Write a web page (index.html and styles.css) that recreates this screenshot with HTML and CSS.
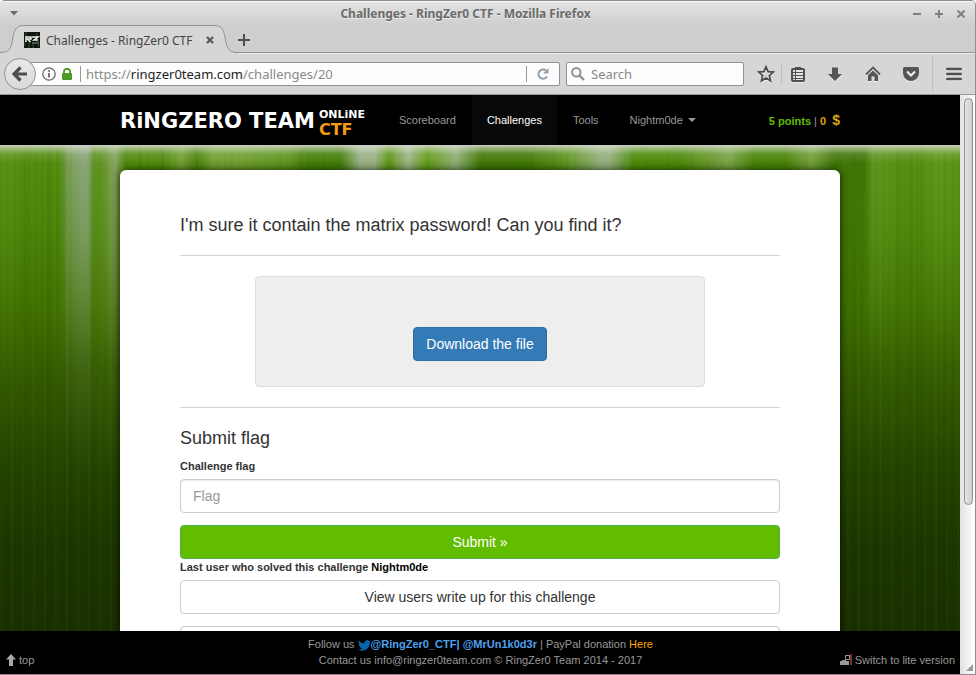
FILE: index.html
```html
<!DOCTYPE html>
<html lang="en">
<head>
<meta charset="utf-8">
<meta name="viewport" content="width=device-width, initial-scale=1">
<title>Challenges - RingZer0 CTF</title>
<link rel="stylesheet" href="styles.css">
</head>
<body>
<div class="window">
  <header class="chrome">
    <div class="titlebar">
      <button class="win-btn" aria-label="Window menu"><svg width="8" height="5" viewBox="0 0 8 5"><path d="M0 0h8L4 4.500z" fill="#6a6a6a"/></svg></button>
      <span class="win-title">Challenges - RingZer0 CTF - Mozilla Firefox</span>
      <div class="win-controls">
        <button class="win-btn" aria-label="Minimize"><svg width="8" height="8" viewBox="0 0 8 8"><path d="M0 4h8" stroke="#808080" stroke-width="2"/></svg></button>
        <button class="win-btn" aria-label="Maximize"><svg width="8" height="8" viewBox="0 0 8 8"><path d="M0 4h8M4 0v8" stroke="#808080" stroke-width="2"/></svg></button>
        <button class="win-btn" aria-label="Close"><svg width="8" height="8" viewBox="0 0 8 8"><path d="M.5.5l7 7M7.500.5l-7 7" stroke="#808080" stroke-width="2"/></svg></button>
      </div>
    </div>
    <div class="tabstrip">
      <div class="tab">
        <svg class="tab-edge" width="24" height="29" viewBox="0 0 24 29"><path d="M0 27.500C9 27.500 11 24 12.500 15C14 5 16 .5 24 .5V29H0z" fill="#d6d6d6"/><path d="M0 27.500C9 27.500 11 24 12.500 15C14 5 16 .5 24 .5" fill="none" stroke="#8f9294"/></svg>
        <div class="tab-body">
          <svg width="16" height="16" viewBox="0 0 16 16"><path fill="#101510" d="M0 0h16v16H0z"/><path d="M2 0v5M5 9v7M13 1v4M9 11v5M1 9v5M14.500 9v6" stroke="#285826"/><path d="M2 10V5h5v2H3.500l3 3M8 5h6l-4 3h4" fill="none" stroke="#f0f3ee" stroke-width="1.500"/><path d="M8 11h6" stroke="#8a918a"/></svg>
          <span class="tab-title">Challenges - RingZer0 CTF</span>
          <button class="win-btn" aria-label="Close tab"><svg width="8" height="8" viewBox="0 0 8 8"><path d="M1 1l6 6M7 1L1 7" stroke="#5a5a5a" stroke-width="2.400"/></svg></button>
        </div>
        <svg class="tab-edge" width="24" height="29" viewBox="0 0 24 29"><path d="M0 .5C8 .5 10 5 11.500 15C13 24 15 27.500 24 27.500V29H0z" fill="#d6d6d6"/><path d="M0 .5C8 .5 10 5 11.500 15C13 24 15 27.500 24 27.500" fill="none" stroke="#8f9294"/></svg>
      </div>
      <button class="new-tab" aria-label="New tab"><svg width="12" height="12" viewBox="0 0 12 12"><path d="M0 6h12M6 0v12" stroke="#4e4e4e" stroke-width="2"/></svg></button>
    </div>
    <div class="toolbar">
      <button class="back" aria-label="Back"><svg width="16" height="16" viewBox="0 0 16 16"><path d="M8.500 1.500L2 8l6.500 6.500M2.500 8H15" fill="none" stroke="#4d4d4d" stroke-width="3.200"/></svg></button>
      <div class="urlbar">
        <svg width="14" height="14" viewBox="0 0 14 14"><circle cx="7" cy="7" r="6.200" fill="none" stroke="#606060" stroke-width="1.200"/><path d="M7 6v4.500M7 3v1.800" stroke="#606060" stroke-width="1.700"/></svg>
        <svg class="lock" width="10" height="12" viewBox="0 0 10 12"><rect y="5" width="10" height="7" rx="1" fill="#4a9a25"/><path d="M2 6V3.500a3 2.700 0 0 1 6 0V6" fill="none" stroke="#4a9a25" stroke-width="1.800"/></svg>
        <span class="rule"></span>
        <div class="url" role="textbox" aria-label="Address" contenteditable="true" spellcheck="false">https://<b>ringzer0team.com</b>/challenges/20</div>
        <span class="rule"></span>
        <button class="reload" aria-label="Reload"><svg width="12" height="12" viewBox="0 0 12 12"><path d="M10 8.500A4.600 4.600 0 1 1 9 2.600" fill="none" stroke="#91a0ad" stroke-width="2"/><path d="M11.500 0v5.500H6z" fill="#91a0ad"/></svg></button>
      </div>
      <label class="search">
        <svg width="14" height="14" viewBox="0 0 14 14"><circle cx="5.300" cy="5.300" r="4.200" fill="none" stroke="#909090" stroke-width="2"/><path d="M8.500 8.500l4.500 4.500" stroke="#909090" stroke-width="2.400"/></svg>
        <input type="text" placeholder="Search" aria-label="Search">
      </label>
      <div class="tools">
        <button class="tool star" aria-label="Bookmark"><svg width="18" height="18" viewBox="0 0 18 18"><path d="M9 1.800l2.100 4.800 5.200.5-3.900 3.500 1.100 5.200L9 13.100l-4.500 2.700 1.100-5.200L1.700 7.100l5.200-.5z" fill="none" stroke="#505050" stroke-width="1.800"/></svg></button>
        <span class="rule pale"></span>
        <button class="tool list" aria-label="Bookmarks list"><svg width="16" height="16" viewBox="0 0 16 16"><path d="M5 3V1h6v2" fill="#505050"/><rect x="2" y="3" width="12" height="12" rx="1" fill="#e4e4e4" stroke="#505050" stroke-width="2"/><path d="M3 6.500h10M3 9.500h10M3 12.500h10" stroke="#505050"/><path d="M5.500 4v10" stroke="#505050"/></svg></button>
        <button class="tool" aria-label="Downloads"><svg width="16" height="16" viewBox="0 0 16 16"><path d="M5 1.500h6V8h4l-7 7-7-7h4z" fill="#555"/></svg></button>
        <button class="tool" aria-label="Home"><svg width="16" height="16" viewBox="0 0 16 16"><path d="M1 8.500l7-7 7 7" fill="none" stroke="#555" stroke-width="1.800"/><path d="M8 4.500L3 9.300V15h3.500v-4.500h3V15H13V9.300z" fill="#555"/></svg></button>
        <button class="tool" aria-label="Pocket"><svg width="18" height="16" viewBox="0 0 18 16"><path d="M2.500 1h13q1.500 0 1.500 1.500V7a8 8 0 0 1-16 0V2.500Q1 1 2.500 1z" fill="#555"/><path d="M5 5.500l4 4 4-4" fill="none" stroke="#eee" stroke-width="2.200"/></svg></button>
        <span class="rule tall"></span>
        <button class="tool" aria-label="Menu"><svg width="16" height="14" viewBox="0 0 16 14"><path d="M1.300 2h13.400M1.300 7h13.400M1.300 12h13.400" stroke="#505050" stroke-width="2.600" stroke-linecap="round"/></svg></button>
      </div>
    </div>
  </header>

  <div class="viewport">
    <div class="page">
      <nav class="navbar">
        <div class="container nav-row">
          <a class="brand" href="#"><span>RiNGZERO TEAM</span><span class="brand-side"><small>ONLiNE</small><b>CTF</b></span></a>
          <a class="nav-link" href="#">Scoreboard</a>
          <a class="nav-link active" href="#">Challenges</a>
          <a class="nav-link" href="#">Tools</a>
          <a class="nav-link" href="#">Nightm0de <span class="caret"></span></a>
          <div class="points"><b class="green">5 points</b> | <b class="gold">0 <span class="dollar">$</span></b></div>
        </div>
      </nav>
      <main class="backdrop">
        <div class="streaks"></div>
        <div class="container panel">
          <h3>I'm sure it contain the matrix password! Can you find it?</h3>
          <hr>
          <div class="well"><a class="btn btn-primary" href="#">Download the file</a></div>
          <hr>
          <form>
            <h3>Submit flag</h3>
            <label class="caption" for="flag">Challenge flag</label>
            <input class="field" id="flag" type="text" placeholder="Flag">
            <button class="btn btn-submit" type="button">Submit »</button>
            <p class="caption">Last user who solved this challenge <a href="#">Nightm0de</a></p>
            <button class="btn btn-default" type="button">View users write up for this challenge</button>
            <button class="btn btn-default" type="button" aria-label="More"></button>
          </form>
        </div>
      </main>
      <footer class="footer">
        <a class="corner" href="#"><svg width="10" height="12" viewBox="0 0 10 12"><path d="M5 0l5 5.500H7V12H3V5.500H0z" fill="#aaa"/></svg>top</a>
        <div class="credits">
          <div>Follow us <svg width="13" height="11" viewBox="0 0 24 20"><path d="M24 2.400a10 10 0 0 1-2.800.8A5 5 0 0 0 23.300.5a10 10 0 0 1-3.100 1.200 4.900 4.900 0 0 0-8.400 4.500A14 14 0 0 1 1.700 1a4.900 4.900 0 0 0 1.500 6.600 5 5 0 0 1-2.200-.6c0 2.300 1.600 4.400 3.900 4.900a5 5 0 0 1-2.200.1 4.900 4.900 0 0 0 4.600 3.400A10 10 0 0 1 0 17.500a14 14 0 0 0 21.500-12.500A10 10 0 0 0 24 2.400z" fill="#0a64a8"/></svg><a class="handle" href="#">@RingZer0_CTF</a><b class="handle">|</b> <a class="handle" href="#">@MrUn1k0d3r</a> | PayPal donation <a class="here" href="#">Here</a></div>
          <div>Contact us info@ringzer0team.com © RingZer0 Team 2014 - 2017</div>
        </div>
        <a class="corner right" href="#"><svg width="12" height="12" viewBox="0 0 12 12"><path d="M0 7h9v4H0zM2 6h4v1H2z" fill="#999"/><path d="M5.500 1.500h4v4h-4z" fill="none" stroke="#999"/><path d="M11 0v11" stroke="#a5482c" stroke-width="1.500"/></svg>Switch to lite version</a>
      </footer>
    </div>
    <div class="scrollbar"><div class="thumb"></div><svg class="grip" width="7" height="7" viewBox="0 0 7 7"><path d="M7 0v7H0z" fill="#999"/></svg></div>
  </div>
</div>
</body>
</html>
```
FILE: styles.css
```css
* { box-sizing: border-box; }
body { margin: 0; background: #fff; }
svg { display: block; flex: none; }
button { padding: 0; border: 0; background: none; font: inherit; }
a { color: inherit; text-decoration: none; }

.window {
  height: 100vh;
  display: flex;
  flex-direction: column;
  border: solid #8e8e8e;
  border-width: 1px 1px 1px 0;
  border-radius: 5px 5px 0 0;
  overflow: hidden;
}

/* Browser chrome */
.chrome { font-family: "Noto Sans", "Open Sans", sans-serif; font-size: 13px; color: #444; }
.titlebar {
  height: 24px;
  display: flex;
  align-items: center;
  justify-content: space-between;
  padding: 0 10px;
  border-top: 1px solid #f6f6f6;
  background: linear-gradient(#e4e4e4, #cecece);
}
.win-title { font-size: 12px; font-weight: 700; color: #6a6a6a; text-shadow: 0 1px #eee; }
.win-controls { display: flex; gap: 14px; }
.tabstrip {
  height: 29px;
  display: flex;
  background: linear-gradient(#cecece 27px, #8f9294 27px, #8f9294 28px, #f0f0f0 28px);
}
.tab { display: flex; }
.tab-body {
  display: flex;
  align-items: center;
  background: #d6d6d6;
  border-top: 1px solid #8f9294;
}
.tab-title { margin: 0 13px 0 6px; font-size: 12px; white-space: nowrap; }
.toolbar {
  height: 41px;
  display: flex;
  align-items: center;
  background: #d6d6d6;
  border-bottom: 1px solid #999;
  padding: 0 2px 0 4px;
}
.back {
  width: 32px;
  height: 32px;
  border: 1px solid #8e9294;
  border-radius: 50%;
  background: linear-gradient(#e8e8e8, #dadada);
  display: flex;
  align-items: center;
  justify-content: center;
  z-index: 1;
}
.urlbar {
  flex: 1;
  min-width: 0;
  height: 24px;
  margin-left: -6px;
  padding-left: 11px;
  display: flex;
  align-items: center;
  background: #fdfdfd;
  border: 1px solid #8e9294;
  border-radius: 2px;
}
.lock { margin: 0 8px 0 6px; }
.rule { width: 1px; height: 16px; background: #9a9a9a; }
.rule.pale { height: 18px; background: #bbb; }
.rule.tall { height: 36px; background: #c0c0c0; margin: 0 2px; }
.url { flex: 1; min-width: 0; padding-left: 5px; color: #8a8a8a; white-space: nowrap; overflow: hidden; outline: 0; }
.url b { font-weight: 400; color: #222; }
.reload { width: 32px; display: flex; justify-content: center; }
.search {
  flex: 0 0 178px;
  min-width: 0;
  height: 24px;
  display: flex;
  align-items: center;
  gap: 4px;
  margin: 0 7px 0 6px;
  padding-left: 4px;
  background: #fdfdfd;
  border: 1px solid #8e9294;
  border-radius: 2px;
}
.search input { flex: 1; min-width: 0; border: 0; outline: 0; background: none; font: inherit; }
.search input::placeholder { color: #888; }
.tools { display: flex; align-items: center; }
.tool { width: 38px; display: flex; justify-content: center; filter: drop-shadow(0 1px #eee); }
.tool.star { width: 30px; }
.tool.list { width: 32px; margin-right: 2px; }

/* Web page */
.viewport { flex: 1; min-height: 0; display: flex; }
.page {
  flex: 1;
  min-width: 0;
  display: flex;
  flex-direction: column;
  font: 11px/16px "Liberation Sans", Arial, sans-serif;
  color: #333;
}
.container { width: 75%; min-width: 720px; margin: 0 auto; }
.navbar { flex: none; background: #000; color: #999; border-bottom: 1px solid #c8c8c8; }
.nav-row { display: flex; gap: 1px; height: 50px; align-items: stretch; }
.brand {
  width: 263px;
  display: flex;
  align-items: center;
  gap: 4px;
  padding-top: 2px;
  font: bold 21px/22px "DejaVu Sans", sans-serif;
  color: #fff;
  white-space: nowrap;
}
.brand-side { display: flex; flex-direction: column; padding-top: 6px; }
.brand small { font-size: 11px; line-height: 12px; }
.brand b { font-size: 16px; line-height: 18px; color: #f39c12; }
.nav-link { display: flex; align-items: center; padding: 0 15px; }
.nav-link.active { background: #080808; color: #fff; }
.caret { margin-left: 5px; border: 4px solid transparent; border-top-color: #999; border-bottom: 0; }
.points { margin-left: auto; align-self: center; white-space: nowrap; }
.green { color: #62bd00; }
.gold { color: #d9a514; }
.dollar { font-size: 14px; margin-left: 3px; }

.backdrop {
  flex: 1;
  min-height: 0;
  display: grid;
  overflow: hidden;
  padding-top: 24px;
  position: relative;
  background:
    repeating-linear-gradient(90deg, rgba(0,0,0,.05) 0 1px, transparent 2px 7px),
    repeating-linear-gradient(90deg, rgba(120,170,50,.06) 0 1px, transparent 3px 11px),
    repeating-linear-gradient(90deg, rgba(0,20,0,.05) 0 2px, transparent 5px 23px),
    linear-gradient(#548f10 0, #4c860a 15%, #427300 32%, #325a00 48%, #254600 64%, #1d3700 82%, #1a3000 100%);
}
.streaks {
  position: absolute;
  inset: 0;
  background:
    linear-gradient(rgba(225,230,220,.7), rgba(225,230,220,.15) 8px, transparent 18px),
    linear-gradient(90deg,
      rgba(110,165,40,.3) 0, transparent 3% 6.200%,
      rgba(170,180,170,.5) 7.200%, rgba(170,180,185,.7) 9%, rgba(120,160,60,.4) 9.800% 10.600%,
      rgba(170,180,150,.65) 12%, rgba(70,130,0,.3) 13% 17%,
      rgba(150,180,90,.5) 19%, rgba(60,115,0,.5) 20.500%, rgba(140,180,80,.5) 22% 25%,
      rgba(110,160,50,.4) 30%, rgba(55,115,0,.6) 32% 35.500%,
      rgba(170,185,160,.85) 37.500% 39%, rgba(100,160,20,.5) 40.500%,
      rgba(175,190,165,.85) 42.500%, rgba(110,170,20,.5) 44.500%,
      rgba(160,185,150,.8) 47.500%, rgba(55,110,0,.7) 50% 55%,
      rgba(110,160,50,.4) 59%, rgba(165,185,155,.8) 62.500% 63.500%, rgba(70,135,0,.6) 66% 71%,
      rgba(150,180,110,.6) 76%, rgba(65,125,0,.6) 78.500% 82%,
      rgba(140,175,90,.6) 84.500%, rgba(50,100,0,.6) 87% 90%,
      rgba(110,165,50,.45) 91%, rgba(90,150,20,.15) 95%, rgba(120,175,50,.35) 98%, rgba(110,165,40,.25) 100%);
  mask-image: linear-gradient(#000, rgba(0,0,0,.7) 20%, rgba(0,0,0,.15) 45%, transparent 70%);
}
.panel {
  position: relative;
  padding: 45px 60px 0;
  background: #fff;
  border-radius: 6px 6px 0 0;
  box-shadow: 0 0 9px rgba(0,0,0,.75);
}
h3 { margin: 0; font-size: 18px; line-height: 20px; font-weight: 400; }
hr { margin: 20px 0; border: 0; border-top: 1px solid #d4d4d4; }
.well {
  width: 75%;
  margin: 0 auto;
  padding: 50px 20px 25px;
  display: flex;
  justify-content: center;
  background: #eee;
  border: 1px solid #dcdcdc;
  border-radius: 4px;
}
.btn {
  height: 34px;
  padding: 0 12px;
  border: 1px solid #ccc;
  border-radius: 4px;
  font-size: 14px;
  line-height: 32px;
  text-align: center;
}
.btn-primary { background: #337ab7; border-color: #2e6da4; color: #fff; }
.caption { display: block; margin: 10px 0 5px; font-weight: 700; }
.field {
  display: block;
  width: 100%;
  height: 34px;
  margin-bottom: 12px;
  padding: 0 12px;
  border: 1px solid #ccc;
  border-radius: 4px;
  box-shadow: inset 0 1px 1px rgba(0,0,0,.075);
  font: 14px "Liberation Sans", Arial, sans-serif;
}
.field::placeholder { color: #999; }
form .btn { display: block; width: 100%; }
.btn-submit { background: #62bd00; border-color: #4cae4c; color: #fff; }
p.caption { margin-top: 0; }
p.caption a { color: #000; }
.btn-default { background: #fff; color: #333; margin-bottom: 12px; }

.footer {
  flex: none;
  display: grid;
  grid-template-columns: 1fr auto 1fr;
  padding: 5px 5px 6px 6px;
  background: #000;
  color: #999;
}
.credits { text-align: center; }
.credits svg { display: inline-block; vertical-align: -3px; }
.handle { color: #4ea3f0; font-weight: 700; }
.here { color: #ffa500; }
.corner { display: flex; align-items: center; align-self: end; gap: 3px; }
.corner.right { justify-self: end; }

.scrollbar {
  flex: 0 0 15px;
  display: flex;
  flex-direction: column;
  align-items: center;
  justify-content: space-between;
  padding: 3px 2px 3px 3px;
  background: linear-gradient(90deg, #e2e2e2, #fff);
}
.thumb {
  width: 9px;
  height: 71%;
  border: 1px solid #8e8e8e;
  border-radius: 5px;
  background: linear-gradient(90deg, #e4e4e4, #cfcfcf);
}
.grip { align-self: flex-end; }
```
